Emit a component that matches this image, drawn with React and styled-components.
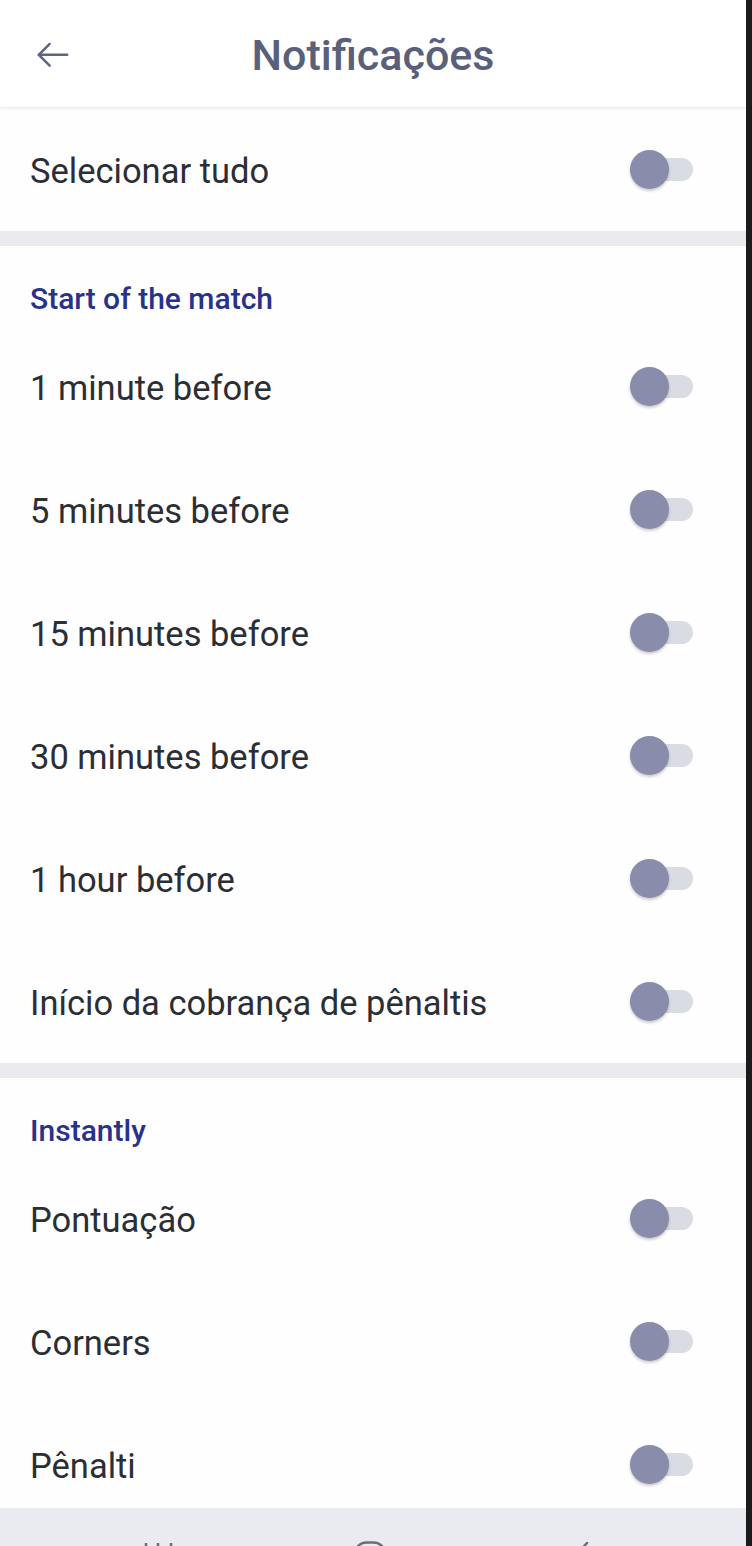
import styled, { createGlobalStyle } from "styled-components";

const GlobalStyle = createGlobalStyle`
  html, body {
    margin: 0;
    padding: 0;
    background: #ffffff;
  }
  body {
    font-family: Roboto, "Noto Sans", "Liberation Sans", sans-serif;
    -webkit-font-smoothing: antialiased;
  }
`;

const Frame = styled.div`
  display: flex;
  width: 752px;
  height: 1546px;
  overflow: hidden;
`;

const Screen = styled.div`
  flex: 1;
  display: flex;
  flex-direction: column;
  min-width: 0;
  background: #fefefe;
`;

const Edge = styled.div`
  width: 6px;
  flex-shrink: 0;
  background: #1b1b1b;
`;

const Header = styled.header`
  position: relative;
  z-index: 1;
  display: flex;
  align-items: center;
  justify-content: center;
  height: 107px;
  flex-shrink: 0;
  background: #ffffff;
  border-bottom: 1px solid #ebecef;
  box-shadow: 0 1px 3px rgba(0, 0, 0, 0.05);
`;

const BackButton = styled.button`
  position: absolute;
  left: 33px;
  top: 50%;
  transform: translateY(-48%);
  display: flex;
  padding: 0;
  background: none;
  border: none;
  color: #5f6580;
  cursor: pointer;
`;

const Title = styled.h1`
  margin: 2px 0 0;
  font-size: 43px;
  font-weight: 500;
  color: #5a6079;
`;

const Content = styled.main`
  flex: 1;
  min-height: 0;
  overflow: hidden;
`;

const Band = styled.div`
  height: 15px;
  background: #e9ebef;
`;

const SectionLabel = styled.div`
  padding: 35px 30px 9px;
  font-size: 30px;
  line-height: 35px;
  font-weight: 500;
  color: #27328c;
`;

const Row = styled.div`
  display: flex;
  align-items: center;
  justify-content: space-between;
  height: 123px;
  padding: 0 53px 0 30px;
  background: #fefefe;
`;

const Label = styled.span`
  font-size: 34.5px;
  color: #2b2e35;
  transform: translateY(1px);
`;

const Toggle = styled.span`
  position: relative;
  display: block;
  width: 63px;
  height: 39px;
`;

const Track = styled.span`
  position: absolute;
  left: 10px;
  right: 0;
  top: 8px;
  height: 23px;
  border-radius: 12px;
  background: #dadce3;
`;

const Thumb = styled.span`
  position: absolute;
  left: 0;
  top: 0;
  width: 39px;
  height: 39px;
  border-radius: 50%;
  background: #898dab;
  box-shadow: 0 2px 3px rgba(0, 0, 0, 0.2);
`;

const NavBar = styled.nav`
  display: flex;
  align-items: flex-start;
  height: 38px;
  flex-shrink: 0;
  overflow: hidden;
  padding: 33px 0 0 143px;
  box-sizing: border-box;
  background: #eaebf0;
  color: #6b6e75;
`;

const NavIcon = styled.span`
  display: flex;
  flex-shrink: 0;
  margin-left: ${({ $gap }) => $gap || 0}px;
`;

function Switch() {
  return (
    <Toggle>
      <Track />
      <Thumb />
    </Toggle>
  );
}

function SettingRow({ label }) {
  return (
    <Row>
      <Label>{label}</Label>
      <Switch />
    </Row>
  );
}

const startItems = [
  "1 minute before",
  "5 minutes before",
  "15 minutes before",
  "30 minutes before",
  "1 hour before",
  "Início da cobrança de pênaltis",
];

const instantItems = ["Pontuação", "Corners", "Pênalti"];

export default function App() {
  return (
    <>
      <GlobalStyle />
      <Frame>
        <Screen>
          <Header>
            <BackButton aria-label="Voltar">
              <svg width="40" height="40" viewBox="0 0 24 24" fill="none" stroke="currentColor" strokeWidth="1.5" strokeLinecap="round" strokeLinejoin="round">
                <path d="M20.5 12H3.5" />
                <path d="M10 5.5L3.5 12L10 18.5" />
              </svg>
            </BackButton>
            <Title>Notificações</Title>
          </Header>
          <Content>
            <SettingRow label="Selecionar tudo" />
            <Band />
            <SectionLabel>Start of the match</SectionLabel>
            {startItems.map((item) => (
              <SettingRow key={item} label={item} />
            ))}
            <Band />
            <SectionLabel>Instantly</SectionLabel>
            {instantItems.map((item) => (
              <SettingRow key={item} label={item} />
            ))}
          </Content>
          <NavBar>
            <NavIcon>
              <svg width="34" height="34" viewBox="0 0 34 34" fill="none" stroke="currentColor" strokeWidth="2.5">
                <path d="M3 2v30M15 2v30M28 2v30" />
              </svg>
            </NavIcon>
            <NavIcon $gap={176}>
              <svg width="34" height="34" viewBox="0 0 34 34" fill="none" stroke="currentColor" strokeWidth="2.5">
                <rect x="1.5" y="1.5" width="31" height="31" rx="12" />
              </svg>
            </NavIcon>
            <NavIcon $gap={183}>
              <svg width="20" height="34" viewBox="0 0 20 34" fill="none" stroke="currentColor" strokeWidth="2.5" strokeLinecap="round">
                <path d="M17 2L3 17L17 32" />
              </svg>
            </NavIcon>
          </NavBar>
        </Screen>
        <Edge />
      </Frame>
    </>
  );
}
